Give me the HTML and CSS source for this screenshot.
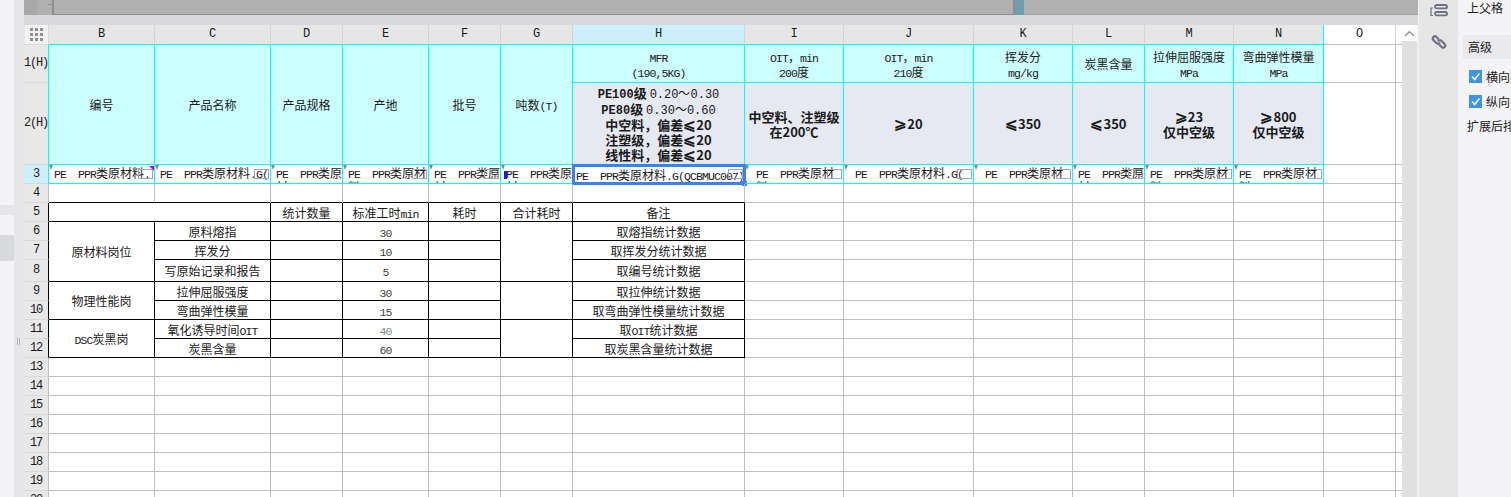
FILE: index.html
```html
<!DOCTYPE html>
<html lang="zh-CN">
<head>
<meta charset="utf-8">
<title>报表设计</title>
<link rel="stylesheet" href="styles.css">
</head>
<body>
<div class="app">
  <aside class="rail-left">
    <div class="rl rl-a"></div><div class="rl rl-b"></div><div class="rl rl-c"></div><div class="rl rl-d"></div><div class="rl rl-e"></div>
  </aside>
  <div class="splitter"><span class="grip"></span></div>
  <main class="main">
    <div class="ruler">
      <div class="rs rs-1"></div>
      <div class="rs rs-2"><span class="tick"></span></div>
      <div class="rs rs-3"></div>
      <div class="rs rs-4"></div>
      <div class="rs rs-5"></div>
    </div>
    <div class="gap-band"></div>
    <div class="sheet-area">
      <div class="sheet">
        <table class="grid">
          <colgroup>
            <col class="c-n"><col class="c-b"><col class="c-c"><col class="c-d"><col class="c-e"><col class="c-f"><col class="c-g"><col class="c-h"><col class="c-i"><col class="c-j"><col class="c-k"><col class="c-l"><col class="c-m"><col class="c-n2"><col class="c-o"><col class="c-x">
          </colgroup>
          <tr class="r-head">
            <td class="corner"><span class="dots"><i></i><i></i><i></i><i></i><i></i><i></i><i></i><i></i><i></i></span></td>
            <td class="ch cy-b">B</td><td class="ch cy-b">C</td><td class="ch cy-b">D</td><td class="ch cy-b">E</td><td class="ch cy-b">F</td><td class="ch cy-b">G</td><td class="ch ch-on cy-b">H</td><td class="ch cy-b">I</td><td class="ch cy-b">J</td><td class="ch cy-b">K</td><td class="ch cy-b">L</td><td class="ch cy-b">M</td><td class="ch cy-b cy-r">N</td><td class="ch ch-off">O</td><td class="x"></td>
          </tr>
          <tr class="r-1">
            <td class="n cy-r">1(H)</td>
            <td class="hc cy" rowspan="2">编号</td>
            <td class="hc cy" rowspan="2">产品名称</td>
            <td class="hc cy" rowspan="2">产品规格</td>
            <td class="hc cy" rowspan="2">产地</td>
            <td class="hc cy" rowspan="2">批号</td>
            <td class="hc cy" rowspan="2">吨数<span class="m">(T)</span></td>
            <td class="hc cy"><span class="m">MFR</span><br><span class="m">(190,5KG)</span></td>
            <td class="hc cy"><span class="m">OIT</span>，<span class="m">min</span><br><span class="m">200</span>度</td>
            <td class="hc cy"><span class="m">OIT</span>，<span class="m">min</span><br><span class="m">210</span>度</td>
            <td class="hc cy">挥发分<br><span class="m">mg/kg</span></td>
            <td class="hc cy">炭黑含量</td>
            <td class="hc cy">拉伸屈服强度<br><span class="m">MPa</span></td>
            <td class="hc cy">弯曲弹性模量<br><span class="m">MPa</span></td>
            <td></td><td class="x"></td>
          </tr>
          <tr class="r-2">
            <td class="n cy-r">2(H)</td>
            <td class="sp cy"><b><span class="w">PE100</span>级 <span class="w th">0.20～0.30</span><br><span class="w">PE80</span>级 <span class="w th">0.30～0.60</span><br>中空料，偏差<span class="ge">⩽</span>20<br>注塑级，偏差<span class="ge">⩽</span>20<br>线性料，偏差<span class="ge">⩽</span>20</b></td>
            <td class="sp cy"><b>中空料、注塑级<br>在200℃</b></td>
            <td class="sp cy"><b><span class="ge">⩾</span>20</b></td>
            <td class="sp cy"><b><span class="ge">⩽</span>350</b></td>
            <td class="sp cy"><b><span class="ge">⩽</span>350</b></td>
            <td class="sp cy"><b><span class="ge">⩾</span>23<br>仅中空级</b></td>
            <td class="sp cy"><b><span class="ge">⩾</span>800<br>仅中空级</b></td>
            <td></td><td class="x"></td>
          </tr>
          <tr class="r-3">
            <td class="n n-on cy-r">3</td>
            <td class="d cy"><div class="t3 nw"><span class="m">PE  PPR</span>类原材料<span class="m">.</span></div><i class="arr"></i><i class="flag"></i><i class="box"></i></td>
            <td class="d cy"><div class="t3 nw"><span class="m">PE  PPR</span>类原材料<span class="m">.G(</span></div><i class="arr"></i><i class="box"></i></td>
            <td class="d cy"><div class="t3"><span class="m">PE  PPR</span>类原材料<span class="m">.G(QCBMUC007)</span></div><i class="arr"></i></td>
            <td class="d cy"><div class="t3"><span class="m">PE  PPR</span>类原材料<span class="m">.G(QCBMUC007)</span></div><i class="arr"></i><i class="box"></i></td>
            <td class="d cy"><div class="t3"><span class="m">PE  PPR</span>类原材料<span class="m">.G(QCBMUC007)</span></div><i class="arr"></i><i class="box"></i></td>
            <td class="d cy"><div class="t3"><span class="m">PE  PPR</span>类原材料<span class="m">.G(QCBMUC007)</span></div><i class="arr"></i><i class="caret"></i></td>
            <td class="d cy"><div class="t3 nw t3-h"><span class="m">PE  PPR</span>类原材料<span class="m">.G(QCBMUC007)</span></div><i class="box"></i><div class="sel"><i class="handle"></i></div></td>
            <td class="d cy"><div class="t3 t3-c"><span class="m">PE  PPR</span>类原材料<span class="m">.G(QCBMUC007)</span></div><i class="arr"></i><i class="box"></i></td>
            <td class="d cy"><div class="t3 nw t3-c"><span class="m">PE  PPR</span>类原材料<span class="m">.G(</span></div><i class="arr"></i><i class="box"></i></td>
            <td class="d cy"><div class="t3 nw t3-c"><span class="m">PE  PPR</span>类原材</div><i class="arr"></i><i class="box"></i></td>
            <td class="d cy"><div class="t3"><span class="m">PE  PPR</span>类原材料<span class="m">.G(QCBMUC007)</span></div><i class="arr"></i><i class="box"></i></td>
            <td class="d cy"><div class="t3"><span class="m">PE  PPR</span>类原材料<span class="m">.G(QCBMUC007)</span></div><i class="arr"></i><i class="box"></i></td>
            <td class="d cy"><div class="t3"><span class="m">PE  PPR</span>类原材料<span class="m">.G(QCBMUC007)</span></div><i class="arr"></i><i class="box"></i></td>
            <td></td><td class="x"></td>
          </tr>
          <tr>
            <td class="n">4</td>
            <td class="k-b"></td><td class="k-b"></td><td class="k-b"></td><td class="k-b"></td><td class="k-b"></td><td class="k-b"></td><td class="k-b"></td>
            <td></td><td></td><td></td><td></td><td></td><td></td><td></td><td class="x"></td>
          </tr>
          <tr>
            <td class="n k-r">5</td>
            <td class="k" colspan="2"></td>
            <td class="k">统计数量</td><td class="k">标准工时<span class="m">min</span></td><td class="k">耗时</td><td class="k">合计耗时</td><td class="k">备注</td>
            <td></td><td></td><td></td><td></td><td></td><td></td><td></td><td class="x"></td>
          </tr>
          <tr>
            <td class="n k-r">6</td>
            <td class="k" rowspan="3">原材料岗位</td><td class="k">原料熔指</td><td class="k"></td><td class="k"><span class="num">30</span></td><td class="k"></td><td class="k" rowspan="3"></td><td class="k">取熔指统计数据</td>
            <td></td><td></td><td></td><td></td><td></td><td></td><td></td><td class="x"></td>
          </tr>
          <tr>
            <td class="n k-r">7</td>
            <td class="k">挥发分</td><td class="k"></td><td class="k"><span class="num">10</span></td><td class="k"></td><td class="k">取挥发分统计数据</td>
            <td></td><td></td><td></td><td></td><td></td><td></td><td></td><td class="x"></td>
          </tr>
          <tr class="r-tall">
            <td class="n k-r">8</td>
            <td class="k">写原始记录和报告</td><td class="k"></td><td class="k"><span class="num">5</span></td><td class="k"></td><td class="k">取编号统计数据</td>
            <td></td><td></td><td></td><td></td><td></td><td></td><td></td><td class="x"></td>
          </tr>
          <tr>
            <td class="n k-r">9</td>
            <td class="k" rowspan="2">物理性能岗</td><td class="k">拉伸屈服强度</td><td class="k"></td><td class="k"><span class="num">30</span></td><td class="k"></td><td class="k" rowspan="2"></td><td class="k">取拉伸统计数据</td>
            <td></td><td></td><td></td><td></td><td></td><td></td><td></td><td class="x"></td>
          </tr>
          <tr>
            <td class="n k-r">10</td>
            <td class="k">弯曲弹性模量</td><td class="k"></td><td class="k"><span class="num">15</span></td><td class="k"></td><td class="k">取弯曲弹性模量统计数据</td>
            <td></td><td></td><td></td><td></td><td></td><td></td><td></td><td class="x"></td>
          </tr>
          <tr>
            <td class="n k-r">11</td>
            <td class="k" rowspan="2"><span class="m">DSC</span>炭黑岗</td><td class="k">氧化诱导时间<span class="m">OIT</span></td><td class="k"></td><td class="k"><span class="num num-l">40</span></td><td class="k"></td><td class="k" rowspan="2"></td><td class="k">取<span class="m">OIT</span>统计数据</td>
            <td></td><td></td><td></td><td></td><td></td><td></td><td></td><td class="x"></td>
          </tr>
          <tr>
            <td class="n k-r">12</td>
            <td class="k">炭黑含量</td><td class="k"></td><td class="k"><span class="num">60</span></td><td class="k"></td><td class="k">取炭黑含量统计数据</td>
            <td></td><td></td><td></td><td></td><td></td><td></td><td></td><td class="x"></td>
          </tr>
          <tr><td class="n">13</td><td></td><td></td><td></td><td></td><td></td><td></td><td></td><td></td><td></td><td></td><td></td><td></td><td></td><td></td><td class="x"></td></tr>
          <tr><td class="n">14</td><td></td><td></td><td></td><td></td><td></td><td></td><td></td><td></td><td></td><td></td><td></td><td></td><td></td><td></td><td class="x"></td></tr>
          <tr><td class="n">15</td><td></td><td></td><td></td><td></td><td></td><td></td><td></td><td></td><td></td><td></td><td></td><td></td><td></td><td></td><td class="x"></td></tr>
          <tr><td class="n">16</td><td></td><td></td><td></td><td></td><td></td><td></td><td></td><td></td><td></td><td></td><td></td><td></td><td></td><td></td><td class="x"></td></tr>
          <tr><td class="n">17</td><td></td><td></td><td></td><td></td><td></td><td></td><td></td><td></td><td></td><td></td><td></td><td></td><td></td><td></td><td class="x"></td></tr>
          <tr><td class="n">18</td><td></td><td></td><td></td><td></td><td></td><td></td><td></td><td></td><td></td><td></td><td></td><td></td><td></td><td></td><td class="x"></td></tr>
          <tr><td class="n">19</td><td></td><td></td><td></td><td></td><td></td><td></td><td></td><td></td><td></td><td></td><td></td><td></td><td></td><td></td><td class="x"></td></tr>
          <tr><td class="n">20</td><td></td><td></td><td></td><td></td><td></td><td></td><td></td><td></td><td></td><td></td><td></td><td></td><td></td><td></td><td class="x"></td></tr>
        </table>
      </div>
      <div class="vscroll">
        <div class="vs-up"><svg class="vs-caret" viewBox="0 0 11 7"><path d="M1 6 L5.5 1.5 L10 6" fill="none" stroke="#8a8a8a" stroke-width="1.2"/></svg></div>
      </div>
    </div>
  </main>
  <div class="rail-right">
    <svg class="ic ic-1" viewBox="0 0 18 13"><path d="M3 4 H1 V11.5 H3" fill="none" stroke="#6d7180" stroke-width="1.2"/><rect x="5" y="1" width="12" height="3.4" rx="1.7" fill="none" stroke="#6d7180" stroke-width="1.8"/><rect x="5" y="8" width="12" height="3.4" rx="1.7" fill="none" stroke="#6d7180" stroke-width="1.8"/></svg>
    <svg class="ic ic-2" viewBox="0 0 16 16"><g fill="none" stroke="#6d7180" stroke-width="2.2" stroke-linecap="round"><path d="M7 4.6 L5.4 3 Q3.9 1.5 2.4 3 Q1 4.5 2.4 6 L5.6 9.2 Q7.1 10.4 8.4 9.2"/><path d="M9 11.4 L10.6 13 Q12.1 14.5 13.6 13 Q15 11.5 13.6 10 L10.4 6.8 Q8.9 5.6 7.6 6.8"/></g></svg>
  </div>
  <aside class="panel">
    <div class="p-row p-parent">上父格</div>
    <div class="p-sec">高级</div>
    <label class="p-check"><span class="cb"><svg viewBox="0 0 13 13"><path d="M3 6.5 L5.6 9.5 L10.5 3.5" fill="none" stroke="#fff" stroke-width="1.6"/></svg></span>横向扩展</label>
    <label class="p-check"><span class="cb"><svg viewBox="0 0 13 13"><path d="M3 6.5 L5.6 9.5 L10.5 3.5" fill="none" stroke="#fff" stroke-width="1.6"/></svg></span>纵向扩展</label>
    <div class="p-row p-after">扩展后排序</div>
  </aside>
</div>
</body>
</html>
```
FILE: styles.css
```css
* { box-sizing: border-box; }
html, body { margin: 0; height: 100%; overflow: hidden; background: #f4f4f6; }
body { font: 12px/15px "Noto Sans CJK SC", "Liberation Sans", sans-serif; color: #1a1a1a; }
.app { display: flex; width: 1511px; height: 497px; overflow: hidden; }

/* left rail */
.rail-left { width: 14px; display: flex; flex-direction: column; background: #f4f4f6; }
.rl-a { height: 205px; }
.rl-b { height: 10px; background: #e6e6e8; }
.rl-c { height: 20px; }
.rl-d { height: 26px; background: #d8dade; }
.rl-e { flex: 1; }
.splitter { width: 10px; background: #e6e6e6; padding: 338px 0 0 3px; }
.grip { display: block; width: 3px; height: 7px; border-left: 1px solid #b8b8b8; border-right: 1px solid #b8b8b8; }

/* centre */
.main { width: 1394px; display: flex; flex-direction: column; overflow: hidden; }
.ruler { height: 15px; display: flex; background: #b0b0b0; flex: none; }
.rs-1 { width: 13px; background: #a8a8a8; }
.rs-2 { width: 17px; background: #b0b0b0; border-right: 2px solid #8e8e8e; padding: 4px 0 0 11px; }
.tick { display: block; width: 5px; height: 1px; background: #8e8e8e; }
.rs-3 { width: 959px; border-bottom: 1px solid #8e8e8e; }
.rs-4 { width: 11px; background: #6f9fae; border-left: 2px solid #8e8e8e; }
.rs-5 { flex: 1; border-bottom: 1px solid #a4a4a4; }
.gap-band { height: 10px; background: #d9d9db; flex: none; }
.sheet-area { flex: 1; display: flex; min-height: 0; background: #fff; }
.sheet { width: 1378px; overflow: hidden; }
.vscroll { width: 16px; background: #e0e0e0; border-right: 1px solid #f0f0f0; }
.vs-up { height: 16px; width: 15px; background: #fff; display: flex; align-items: center; justify-content: center; }
.vs-caret { width: 11px; height: 7px; display: block; }

/* grid */
.grid { border-collapse: separate; border-spacing: 0; table-layout: fixed; width: 1378px; }
.c-n { width: 25px; } .c-b { width: 106px; } .c-c { width: 116px; } .c-d { width: 72px; }
.c-e { width: 86px; } .c-f { width: 72px; } .c-g { width: 72px; } .c-h { width: 172px; }
.c-i { width: 99px; } .c-j { width: 130px; } .c-k { width: 99px; } .c-l { width: 72px; }
.c-m { width: 89px; } .c-n2 { width: 90px; } .c-o { width: 72px; } .c-x { width: 6px; }
.grid td {
  height: 19px; padding: 0; text-align: center; vertical-align: middle; position: relative;
  border-right: 1px solid #c0c0c0; border-bottom: 1px solid #c0c0c0; overflow: hidden;
}
.grid td.d { overflow: visible; }
.grid tr.r-head td { height: 20px; }
.grid tr.r-1 td { height: 38px; }
.grid tr.r-2 td { height: 82px; }
.grid tr.r-3 td { height: 19px; }
.grid tr.r-tall td { height: 22px; }
.grid td.x { border-right: 0; }

.m { font: 11.5px/11px "Liberation Mono", monospace; letter-spacing: -.9px; white-space: pre; }
.w { font: bold 12px/12px "Liberation Mono", monospace; }
.th { font-weight: normal; }
b { font-weight: 700; font-size: 13px; line-height: 15px; }
.ge { font-size: 15px; line-height: 12px; }
.num { font: 11.5px/11px "Liberation Mono", monospace; color: #444; letter-spacing: -.9px; }
.num-l { color: #888; }

.grid td.corner { background: #f2f2f5; border-right: 1px solid #d9d9d9; border-bottom: 1px solid #d9d9d9; border-left: 1px solid #e6e6e6; }
.dots { display: grid; grid-template-columns: repeat(3, 3px); gap: 2px; justify-content: center; }
.dots i { width: 3px; height: 3px; background: #909090; display: block; }
.grid td.ch { background: #e6e6e6; font: 12px/15px "Liberation Mono", monospace; border-right-color: #d4d4d4; }
.grid td.ch-on { background: #cdeefb; }
.grid td.ch-off { background: #fff; }
.grid td.n { background: #e8e8e8; font: 12px/15px "Liberation Mono", monospace; letter-spacing: -1.2px; border-bottom-color: #d9d9d9; }
.grid td.n-on { background: #cdeefb; }

.grid td.cy { border-right-color: #00ffff; border-bottom-color: #00ffff; }
.grid td.cy-r { border-right-color: #00ffff; }
.grid td.cy-b { border-bottom-color: #00ffff; }
.grid td.hc { background: #ccffff; }
.grid td.sp { background: #e6e9f2; }
.grid td.k { border-right-color: #000; border-bottom-color: #000; }
.grid td.k-r { border-right-color: #000; }
.grid td.k-b { border-bottom-color: #000; }

/* row 3 */
.t3 { height: 18px; overflow: hidden; text-align: left; padding: 1px 0 0 5px; line-height: 14px; margin-right: -2px; }
.nw { white-space: nowrap; margin-right: 0; }
.t3-c { padding-left: 11px; }
.t3-h { padding-left: 3px; padding-top: 3px; }
.arr { position: absolute; left: 0; top: 0; width: 0; height: 0; border: 2.5px solid transparent; border-top: 5px solid #8a8a8a; border-bottom: 0; }
.flag { position: absolute; right: 0; top: 1px; width: 0; height: 0; border-top: 5px solid #c000e0; border-left: 5px solid transparent; }
.box { position: absolute; right: 1px; bottom: 4px; width: 15px; height: 10px; border: 1px solid #9aa8c4; }
.caret { position: absolute; left: 3px; top: 6px; width: 3px; height: 8px; background: #1a1ae0; }
.sel { position: absolute; left: -1px; top: -1px; right: -2px; bottom: -2px; border: 3px solid #3b82ee; pointer-events: none; }
.handle { position: absolute; right: -4px; bottom: -4px; width: 5px; height: 5px; background: #3b82ee; }

/* right rail */
.rail-right { width: 40px; background: #e6e6e6; border-left: 1px solid #f0f0f0; display: flex; flex-direction: column; align-items: center; padding-top: 4px; flex: none; }
.ic { display: block; flex: none; }
.ic-1 { width: 18px; height: 13px; }
.ic-2 { width: 16px; height: 16px; margin-top: 17px; }

/* panel */
.panel { width: 53px; background: #f4f4f6; overflow: hidden; flex: none; white-space: nowrap; color: #222; }
.p-row { padding-left: 9px; }
.p-parent { height: 35px; line-height: 16px; }
.p-sec { margin-left: 5px; height: 24px; line-height: 24px; padding-left: 5px; background: #eaeaed; }
.p-check { display: flex; align-items: center; height: 25px; padding-left: 11px; gap: 4px; }
.p-sec + .p-check { margin-top: 5px; }
.cb { width: 13px; height: 13px; background: #3b94f0; flex: none; display: block; }
.cb svg { display: block; width: 13px; height: 13px; }
.p-after { margin-top: 1px; height: 22px; line-height: 22px; }
```
